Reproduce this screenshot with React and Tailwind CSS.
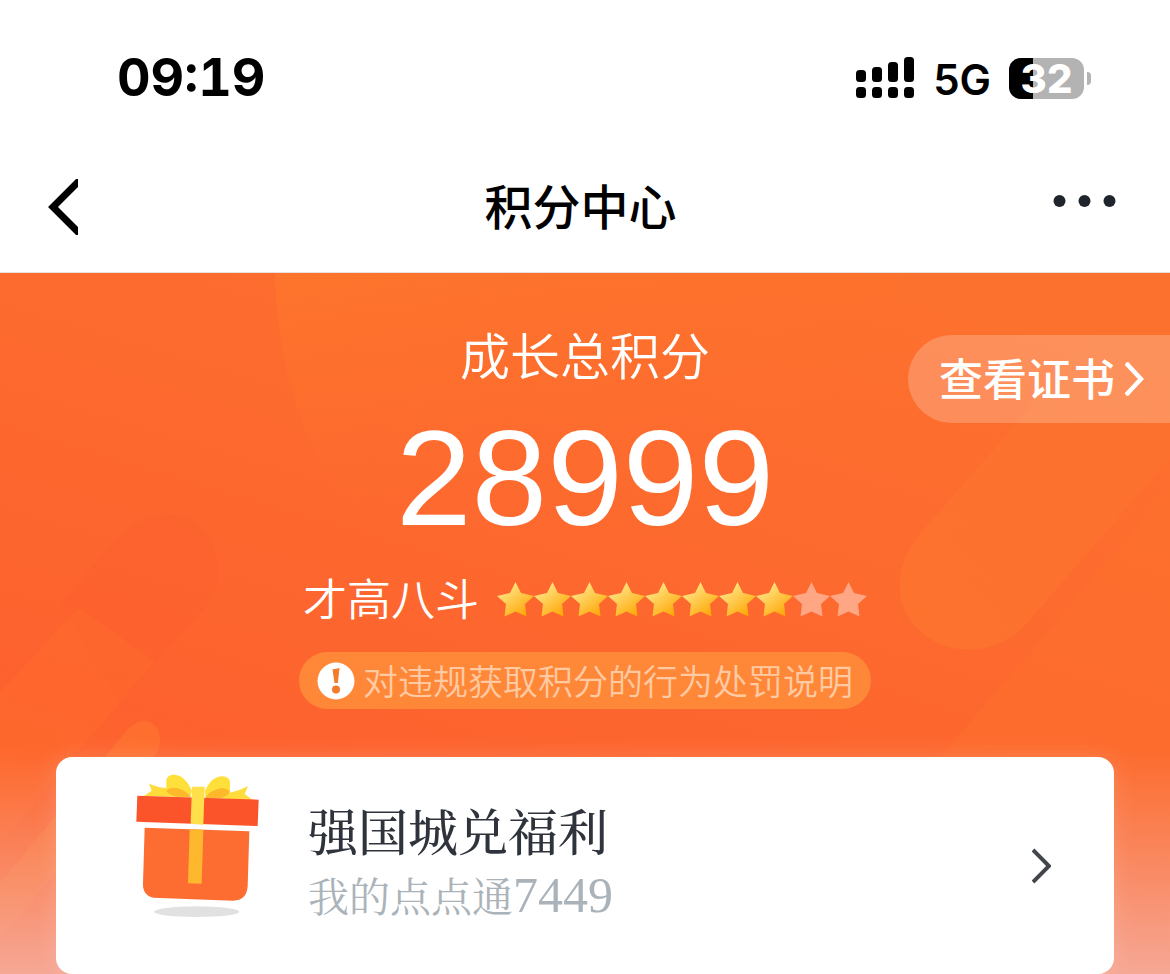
import React from 'react'

const SANS = "font-['Liberation_Sans','Noto_Sans_CJK_SC',sans-serif]"
const TOTAL_STARS = 10

function SignalIcon() {
  return (
    <svg width="58" height="42" viewBox="0 0 58 42" aria-hidden="true">
      <rect x="0" y="13" width="10" height="12" rx="3.5" />
      <rect x="16" y="10" width="10" height="15" rx="3.5" />
      <rect x="32" y="5" width="10" height="20" rx="3.5" />
      <rect x="48" y="0" width="10" height="25" rx="3.5" />
      <rect x="0" y="30" width="10" height="11" rx="3.5" />
      <rect x="16" y="30" width="10" height="11" rx="3.5" />
      <rect x="32" y="30" width="10" height="11" rx="3.5" />
      <rect x="48" y="30" width="10" height="11" rx="3.5" />
    </svg>
  )
}

function Battery({ level }) {
  return (
    <div className="flex items-center gap-[3px]">
      <div className="relative flex h-[41px] w-[75px] items-center justify-center rounded-xl bg-[#b3b3b3]">
        <div className="absolute inset-y-0 left-0 rounded-l-xl bg-black" style={{ width: `${level}%` }} />
        <span className="relative text-[40px] leading-[41px] font-extrabold text-white">{level}</span>
      </div>
      <div className="h-[13px] w-1 rounded-r-full bg-[#b3b3b3]" />
    </div>
  )
}

function StatusBar() {
  return (
    <div className="flex h-36 items-center justify-between pt-3 pr-[79px] pl-[117px] font-['Inter',sans-serif] text-black">
      <span className="text-[52px] leading-none font-bold tabular-nums">09:19</span>
      <div className="flex items-center">
        <SignalIcon />
        <span className="mr-[18px] ml-[19px] pt-1 text-[42px] leading-none font-semibold">5G</span>
        <Battery level={32} />
      </div>
    </div>
  )
}

function NavBar() {
  return (
    <header className="flex h-[129px] items-center justify-between border-b border-[#e8e0dc] pr-[54px] pb-0.5 pl-12">
      <button type="button" aria-label="返回" className="w-15">
        <svg width="30" height="56" viewBox="0 0 30 56" fill="none" stroke="#000" strokeWidth="7">
          <path d="M37 -4L5 28L37 60" />
        </svg>
      </button>
      <h1 className="pt-1 text-[48px] leading-none font-medium text-black">积分中心</h1>
      <button type="button" aria-label="更多" className="pb-3">
        <svg width="63" height="12" viewBox="0 0 63 12" fill="#20242c">
          <circle cx="6.5" cy="6" r="6" />
          <circle cx="31.5" cy="6" r="6" />
          <circle cx="56.5" cy="6" r="6" />
        </svg>
      </button>
    </header>
  )
}

function HeroBackground() {
  return (
    <svg
      className="absolute inset-0 h-full w-full"
      viewBox="0 0 1170 702"
      preserveAspectRatio="xMidYMin slice"
      aria-hidden="true"
    >
      <defs>
        <linearGradient id="base" x1="0.75" y1="0" x2="0.25" y2="1">
          <stop offset="0" stopColor="#fd712e" />
          <stop offset="0.45" stopColor="#fd682e" />
          <stop offset="0.75" stopColor="#fd622e" />
          <stop offset="1" stopColor="#fe662c" />
        </linearGradient>
        <linearGradient id="bubble" x1="0" y1="0" x2="0.5" y2="1">
          <stop offset="0" stopColor="#fe782c" stopOpacity="0.7" />
          <stop offset="0.7" stopColor="#fe702c" stopOpacity="0" />
        </linearGradient>
        <linearGradient id="pill" x1="1" y1="0" x2="0" y2="1">
          <stop offset="0" stopColor="#fd752e" stopOpacity="0.2" />
          <stop offset="1" stopColor="#fd732e" />
        </linearGradient>
        <linearGradient id="fade" x1="0" y1="0" x2="0" y2="1">
          <stop offset="0" stopColor="#f6a590" stopOpacity="0" />
          <stop offset="1" stopColor="#f6a896" />
        </linearGradient>
      </defs>
      <rect width="1170" height="702" fill="url(#base)" />
      <path d="M275 0C277 90 300 165 345 225C400 290 500 320 590 300C760 270 880 200 905 0Z" fill="url(#bubble)" />
      <path d="M1000 170L918 263C890 300 895 340 925 362C955 385 1000 380 1025 352L1170 185V60H1090Z" fill="url(#pill)" />
      <path d="M1170 215L940 484V702H1170Z" fill="#fe742c" opacity="0.3" />
      <path d="M120 262C150 235 190 235 208 262C222 285 222 315 205 335L120 430L60 330Z" fill="#fd5c2e" opacity="0.3" />
      <path d="M78 335L155 388L0 570V420Z" fill="#fe6f2c" opacity="0.35" />
      <path d="M0 610L128 456C145 440 160 450 160 468C160 475 156 482 150 489L0 665Z" fill="#fe822f" opacity="0.4" />
      <rect y="475" width="1170" height="227" fill="url(#fade)" />
    </svg>
  )
}

function Star({ active }) {
  return (
    <svg width="37" height="35" viewBox="0 0 37 35" fill={active ? 'url(#star)' : '#ffa684'} aria-hidden="true">
      <path d="M18.5 0L24 11L37 14L28 22L29.5 34.5L18.5 29.5L7.5 34.5L9 22L0 14L13 11Z" />
    </svg>
  )
}

function Stars({ count }) {
  return (
    <div className="flex" role="img" aria-label={`${count}/${TOTAL_STARS}`}>
      <svg width="0" height="0" className="absolute">
        <defs>
          <linearGradient id="star" x1="0.1" y1="0.1" x2="0.8" y2="1">
            <stop offset="0.15" stopColor="#ffe07c" />
            <stop offset="1" stopColor="#ffa400" />
          </linearGradient>
        </defs>
      </svg>
      {Array.from({ length: TOTAL_STARS }, (_, i) => (
        <Star key={i} active={i < count} />
      ))}
    </div>
  )
}

function NoticeIcon() {
  return (
    <svg width="38" height="38" viewBox="0 0 38 38" aria-hidden="true">
      <circle cx="19" cy="19" r="18.5" fill="#fff" />
      <path d="M15.5 7.5L22.5 6L20.8 21H17.5Z" fill="#f47a2c" />
      <circle cx="19" cy="27.5" r="4" fill="#f47a2c" />
    </svg>
  )
}

function GiftIcon() {
  return (
    <svg width="123" height="145" viewBox="78 70 369 435" aria-hidden="true">
      <ellipse cx="260" cy="486" rx="128" ry="16" fill="#e1e1e1" />
      {/* ribbon tails */}
      <path d="M102 139L125 123L117 101C135 112 155 114 180 117L240 143Z" fill="#ffdb3c" />
      <path d="M428 150L404 134L414 109C397 119 375 126 355 130L285 145Z" fill="#ffdb3c" />
      {/* bow */}
      <path d="M169 124V92C171 80 180 75 193 75C218 76 235 99 246 124L240 143Z" fill="#ffdf3a" />
      <path d="M360 127V95C357 85 348 80 335 80C310 82 296 100 285 124L287 145Z" fill="#ffdf3a" />
      <path d="M169 124C180 111 200 112 215 120C230 127 240 135 243 143L205 141C188 140 175 132 169 124Z" fill="#fdb82c" />
      <path d="M360 127C350 113 330 114 315 121C298 128 289 137 286 145L325 146C342 144 354 136 360 127Z" fill="#fdb82c" />
      {/* lid and box */}
      <path d="M82 138L446 150L443 229L79 216Z" fill="#fb532a" />
      <path d="M104 234L418 245L413 410C411 438 396 453 370 453L130 444C109 439 98 424 99 402Z" fill="#fd6c31" />
      <path d="M239 239L280 240L275 402L234 401Z" fill="#feb82d" />
      <path d="M246 111H284L280 225L242 222Z" fill="#ffe04a" />
    </svg>
  )
}

function PointsSummary() {
  return (
    <section className="relative flex flex-col items-center text-white">
      <h2 className="pt-1 text-[50px] leading-[56px] font-[350]">成长总积分</h2>
      <p className="mt-6 text-[136px] leading-[136px]">28999</p>
      <div className="mt-6 flex h-[58px] items-center gap-[18px]">
        <span className="pt-1 text-[44px] leading-none font-[350]">才高八斗</span>
        <Stars count={8} />
      </div>
      <a href="#rules" className="mt-6 flex h-[57px] items-center gap-2 rounded-full bg-[#ff8738] px-[18px] text-[#ffcaa2]">
        <NoticeIcon />
        <span className="pt-1 text-[35px] leading-none font-[350]">对违规获取积分的行为处罚说明</span>
      </a>
    </section>
  )
}

function CertificateLink() {
  return (
    <a
      href="#certificate"
      className="absolute top-[62px] right-0 flex h-[88px] items-center gap-[10px] rounded-l-full bg-white/22 pr-[26px] pl-[31px] text-white"
    >
      <span className="pt-1 text-[44px] leading-none font-medium">查看证书</span>
      <svg width="19" height="34" viewBox="0 0 19 34" fill="none" stroke="#fff" strokeWidth="4.5" aria-hidden="true">
        <path d="M1 1L16 17L1 33" />
      </svg>
    </a>
  )
}

function RewardCard() {
  return (
    <a
      href="#rewards"
      className="relative mx-14 mt-12 flex h-[217px] items-start rounded-2xl bg-white pt-4 pr-[63px] pl-20 shadow-[0_0_24px_rgba(255,255,255,0.15)]"
    >
      <GiftIcon />
      <div className="ml-[49px] flex-1 pt-6 font-['Noto_Serif_CJK_SC','Noto_Sans_CJK_SC',serif]">
        <h3 className="text-[50px] leading-[64px] font-medium text-[#2f333b]">强国城兑福利</h3>
        <p className="flex items-center text-[41px] leading-[68px] text-[#abb3ba]">
          我的点点通<span className="font-['Liberation_Serif',serif] text-[50px]">7449</span>
        </p>
      </div>
      <svg className="mt-[75px]" width="19" height="36" viewBox="0 0 19 36" fill="none" stroke="#42464c" strokeWidth="4" aria-hidden="true">
        <path d="M1 2L17 18L1 34" />
      </svg>
    </a>
  )
}

export default function App() {
  return (
    <div className={`flex min-h-screen flex-col bg-white ${SANS}`}>
      <StatusBar />
      <NavBar />
      <main className="relative flex-1 overflow-hidden pt-[53px]">
        <HeroBackground />
        <PointsSummary />
        <CertificateLink />
        <RewardCard />
      </main>
    </div>
  )
}
